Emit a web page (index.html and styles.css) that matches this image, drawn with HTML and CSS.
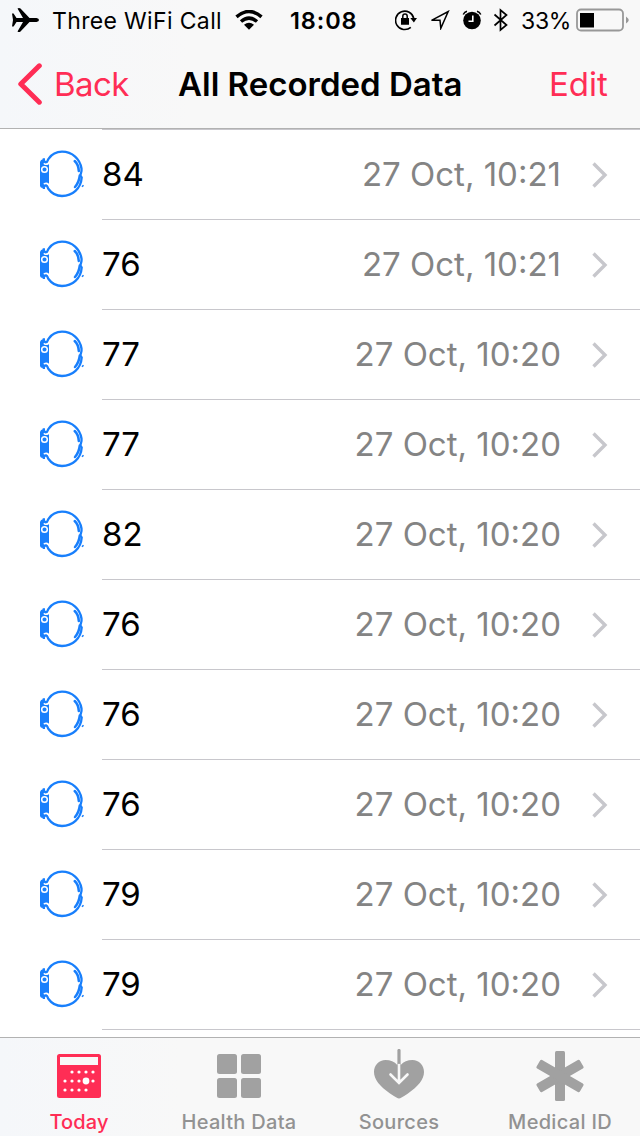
FILE: index.html
```html
<!DOCTYPE html>
<html lang="en">
<head>
<meta charset="UTF-8">
<meta name="viewport" content="width=device-width, initial-scale=1.0">
<title>All Recorded Data</title>
<link rel="stylesheet" href="styles.css">
</head>
<body>

<!-- shared icons for the list rows -->
<svg class="sprite" width="0" height="0">
    <symbol id="watch" viewBox="0 0 56 56">
        <path d="M6 16Q6.500 13.800 8.500 13.200L15 17V38.500L8.500 42Q6.500 41.800 6 40Z" fill="#187ffc"/>
        <path d="M16 15.500Q13.500 19.500 10 17M16 40.500Q13.500 36 10 38.500" fill="none" stroke="#fff" stroke-width="2.200"/>
        <path d="M9.800 12.200Q9.800 16.800 12.200 16.200C13.700 15.700 13.300 14.500 14.500 12.800C17.500 8.500 22.500 5.700 28 5.700C38.500 5.700 46 13 47.500 22.500C48 26.500 46.300 27.500 46.500 29.500L47.700 31.500C47 42.500 38.500 50 28 50C22.500 50 17.500 47.200 14.500 43C13.300 41.300 13.700 40 12.200 39.500Q9.800 39 9.800 43" fill="none" stroke="#187ffc" stroke-width="2.300"/>
        <circle cx="10.500" cy="23.500" r="2.800" fill="#187ffc" stroke="#fff" stroke-width="1.500"/>
        <path d="M40.700 15Q44.500 18.500 44.800 25M45.800 29.500Q45 36.500 41 41" fill="none" stroke="#187ffc" stroke-width="2.500" stroke-linecap="round"/>
        <path d="M48 40.800L49.500 39.200" stroke="#187ffc" stroke-width="1.500"/>
    </symbol>
    <symbol id="chevron" viewBox="0 0 18 28">
        <path d="M2.500 2.500L14 14L2.500 25.500" fill="none" stroke="#c7c7cc" stroke-width="3.400"/>
    </symbol>
</svg>

<div class="phone">
    <header class="header">
        <div class="status">
            <div class="status-left">
                <svg class="plane" width="30" height="26" viewBox="0 0 30 26">
                    <path d="M1 6.500H2.600L5.500 11H12L6.500 1.500Q8 0.300 9.500 1.500L18.500 11H25.500Q28 11.300 28 13Q28 14.700 25.500 15H18.500L9.500 24.500Q8 25.700 6.500 24.500L12 15H5.500L2.600 19.500H1L2 13Z"/>
                </svg>
                <span class="carrier">Three WiFi Call</span>
                <svg class="wifi" width="28" height="20" viewBox="0 0 28 20">
                    <path d="M1.500 6.800Q14 -3.800 26.500 6.800M6 11.500Q14 4.800 22 11.500" fill="none" stroke="#000" stroke-width="3.500"/>
                    <path d="M9 14.800Q14 10.500 19 14.800L14 19.700Z"/>
                </svg>
            </div>
            <span class="clock">18:08</span>
            <div class="status-right">
                <svg class="lock" width="24" height="22" viewBox="0 0 24 22">
                    <path d="M15.800 18.300A9.200 9.200 0 1 1 18.800 9.500" fill="none" stroke="#000" stroke-width="1.600"/>
                    <path d="M15.300 9H22L18.900 13.500ZM6 9H14V15.800H6Z"/>
                    <path d="M7.800 9.500V7.200A2.200 2.200 0 0 1 12.200 7.200V9.500" fill="none" stroke="#000" stroke-width="1.500"/>
                </svg>
                <svg class="location" width="20" height="20" viewBox="0 0 20 20">
                    <path d="M1.500 10.300L18.200 1.500L10.800 18.300L10 10.300Z" fill="none" stroke="#000" stroke-width="1.500"/>
                </svg>
                <svg class="alarm" width="20" height="20" viewBox="0 0 20 20">
                    <circle cx="10" cy="10.500" r="8.800"/>
                    <path d="M1.200 4.500Q2.500 2 5 1.300M18.800 4.500Q17.500 2 15 1.300" fill="none" stroke="#000" stroke-width="1.500"/>
                    <path d="M10.800 5.500V11.300H6.500" fill="none" stroke="#fff" stroke-width="1.600"/>
                </svg>
                <svg class="bluetooth" width="16" height="24" viewBox="0 0 16 24">
                    <path d="M1.500 6.500L13.500 17L7.500 22V2L13.500 7L1.500 17.500" fill="none" stroke="#000" stroke-width="1.700"/>
                </svg>
                <span class="percent">33%</span>
                <svg class="battery" width="54" height="24" viewBox="0 0 54 24">
                    <rect x="1" y="1.500" width="46" height="21" rx="4" fill="none" stroke="#989898" stroke-width="1.800"/>
                    <rect x="4" y="5" width="14" height="14.500"/>
                    <path d="M50 8.500Q52.800 10.500 52.800 12Q52.800 13.500 50 15.500Z" fill="#989898"/>
                </svg>
            </div>
        </div>

        <nav class="nav">
            <a class="back">
                <svg width="26" height="42" viewBox="0 0 26 42">
                    <path d="M22.300 2.800L3.800 21L22.300 39.200" fill="none" stroke="#ff2d55" stroke-width="5" stroke-linecap="round" stroke-linejoin="round"/>
                </svg>
                <span>Back</span>
            </a>
            <h1>All Recorded Data</h1>
            <a class="edit">Edit</a>
        </nav>
    </header>

    <ul class="list">
        <li><svg class="watch"><use href="#watch"/></svg><div class="row"><span class="value">84</span><span class="date">27 Oct, 10:21</span><svg class="chevron"><use href="#chevron"/></svg></div></li>
        <li><svg class="watch"><use href="#watch"/></svg><div class="row"><span class="value">76</span><span class="date">27 Oct, 10:21</span><svg class="chevron"><use href="#chevron"/></svg></div></li>
        <li><svg class="watch"><use href="#watch"/></svg><div class="row"><span class="value">77</span><span class="date">27 Oct, 10:20</span><svg class="chevron"><use href="#chevron"/></svg></div></li>
        <li><svg class="watch"><use href="#watch"/></svg><div class="row"><span class="value">77</span><span class="date">27 Oct, 10:20</span><svg class="chevron"><use href="#chevron"/></svg></div></li>
        <li><svg class="watch"><use href="#watch"/></svg><div class="row"><span class="value">82</span><span class="date">27 Oct, 10:20</span><svg class="chevron"><use href="#chevron"/></svg></div></li>
        <li><svg class="watch"><use href="#watch"/></svg><div class="row"><span class="value">76</span><span class="date">27 Oct, 10:20</span><svg class="chevron"><use href="#chevron"/></svg></div></li>
        <li><svg class="watch"><use href="#watch"/></svg><div class="row"><span class="value">76</span><span class="date">27 Oct, 10:20</span><svg class="chevron"><use href="#chevron"/></svg></div></li>
        <li><svg class="watch"><use href="#watch"/></svg><div class="row"><span class="value">76</span><span class="date">27 Oct, 10:20</span><svg class="chevron"><use href="#chevron"/></svg></div></li>
        <li><svg class="watch"><use href="#watch"/></svg><div class="row"><span class="value">79</span><span class="date">27 Oct, 10:20</span><svg class="chevron"><use href="#chevron"/></svg></div></li>
        <li><svg class="watch"><use href="#watch"/></svg><div class="row"><span class="value">79</span><span class="date">27 Oct, 10:20</span><svg class="chevron"><use href="#chevron"/></svg></div></li>
    </ul>

    <footer class="tabs">
        <a class="tab active">
            <svg width="52" height="52" viewBox="0 0 52 52">
                <rect x="4" y="5" width="44" height="44" rx="2.500" fill="#ff2d55"/>
                <path d="M7 8H45V16H7Z" fill="#f8f8f8"/>
                <g fill="#fff">
                    <circle cx="19" cy="23" r="1.600"/><circle cx="26" cy="23" r="1.600"/><circle cx="33" cy="23" r="1.600"/><circle cx="40" cy="23" r="1.600"/>
                    <circle cx="12" cy="32" r="1.600"/><circle cx="19" cy="32" r="1.600"/><circle cx="26" cy="32" r="1.600"/><circle cx="33" cy="32" r="3.400"/><circle cx="40" cy="32" r="1.600"/>
                    <circle cx="12" cy="41" r="1.600"/><circle cx="19" cy="41" r="1.600"/><circle cx="26" cy="41" r="1.600"/><circle cx="33" cy="41" r="1.600"/>
                </g>
            </svg>
            <span>Today</span>
        </a>
        <a class="tab">
            <svg width="52" height="52" viewBox="0 0 52 52" fill="#a1a1a1">
                <rect x="4" y="5" width="20" height="20" rx="2.500"/>
                <rect x="28" y="5" width="20" height="20" rx="2.500"/>
                <rect x="4" y="29" width="20" height="20" rx="2.500"/>
                <rect x="28" y="29" width="20" height="20" rx="2.500"/>
            </svg>
            <span>Health Data</span>
        </a>
        <a class="tab">
            <svg width="52" height="52" viewBox="0 0 52 52">
                <path d="M26 49.500Q24.500 49.500 17 44.500C7 37.500 1 30.500 1 23C1 16 6 11 12.500 11Q20 11 24.300 16H27.700Q32 11 39.500 11C46 11 51 16 51 23C51 30.500 45 37.500 35 44.500Q27.500 49.500 26 49.500Z" fill="#a1a1a1"/>
                <path d="M26 1.500V16" stroke="#a1a1a1" stroke-width="3.200" stroke-linecap="round"/>
                <path d="M26 16V33M17.500 25.500L26 34L34.500 25.500" fill="none" stroke="#f8f8f8" stroke-width="2.600" stroke-linecap="round"/>
            </svg>
            <span>Sources</span>
        </a>
        <a class="tab">
            <svg width="52" height="52" viewBox="0 0 52 52" fill="#a1a1a1">
                <rect x="21" y="2" width="10" height="50" rx="1.500"/>
                <rect x="21" y="2" width="10" height="50" rx="1.500" transform="rotate(60 26 27)"/>
                <rect x="21" y="2" width="10" height="50" rx="1.500" transform="rotate(-60 26 27)"/>
            </svg>
            <span>Medical ID</span>
        </a>
    </footer>
</div>

</body>
</html>
```
FILE: styles.css
```css
* {
    box-sizing: border-box;
}

body {
    margin: 0;
    background-color: #fff;
    font-family: Inter, "Liberation Sans", sans-serif;
}

svg {
    display: block;
    flex-shrink: 0;
}

.sprite {
    position: absolute;
}

.phone {
    display: flex;
    flex-direction: column;
    width: 640px;
    height: 1136px;
    overflow: hidden;
}

.header {
    height: 129px;
    background: linear-gradient(to right, #f5f7fa, #f8f8f8 190px);
    border-bottom: 1px solid #b2b2b2;
}

/* status bar */
.status {
    display: grid;
    grid-template-columns: 290px 68px 1fr;
    align-items: center;
    height: 40px;
    white-space: nowrap;
}

.status-left, .status-right {
    display: flex;
    align-items: center;
}

.status-left {
    padding-left: 11px;
}

.carrier {
    width: 170px;
    margin-left: 11px;
    padding-top: 1px;
    font-size: 23px;
    letter-spacing: 0.35px;
}

.wifi {
    margin-left: 13px;
}

.clock {
    font-size: 23.5px;
    font-weight: 600;
    letter-spacing: 0.9px;
}

.status-right {
    padding-left: 37px;
}

.location {
    margin-left: 11px;
}

.alarm {
    margin-left: 12px;
}

.bluetooth {
    margin-left: 11px;
}

.percent {
    width: 49px;
    margin-left: 12px;
    padding-top: 1px;
    font-size: 23px;
    letter-spacing: -0.3px;
}

.battery {
    margin-left: 6px;
}

/* navigation bar */
.nav {
    display: grid;
    grid-template-columns: 178px 1fr 91px;
    align-items: center;
    height: 88px;
    font-size: 33px;
    white-space: nowrap;
}

.back {
    display: flex;
    align-items: center;
    gap: 11px;
    padding-left: 17px;
    color: #ff2d55;
}

.back span {
    letter-spacing: -0.6px;
}

h1 {
    margin: 0;
    font-size: 33px;
    font-weight: 600;
}

.edit {
    color: #ff2d55;
}

/* recorded values */
.list {
    flex: 1;
    margin: 0;
    padding: 0;
    list-style: none;
}

.list::before {
    content: "";
    display: block;
    height: 1px;
    margin-left: 102px;
    background-color: #c8c7cc;
}

.list li {
    display: flex;
    align-items: center;
    gap: 12px;
    height: 90px;
    padding-left: 34px;
}

.watch {
    width: 56px;
    height: 56px;
    margin-bottom: 2px;
}

.row {
    display: flex;
    flex: 1;
    align-items: center;
    height: 90px;
    padding-right: 31px;
    border-bottom: 1px solid #c8c7cc;
    font-size: 33px;
}

.value, .date {
    padding-bottom: 2px;
}

.value {
    flex: 1;
}

.date {
    color: #848484;
}

.chevron {
    width: 18px;
    height: 28px;
    margin-left: 30px;
}

/* tab bar */
.tabs {
    display: grid;
    grid-template-columns: repeat(4, 160px);
    height: 99px;
    background: linear-gradient(to right, #f5f7fa, #f8f8f8 180px);
    border-top: 1px solid #b2b2b2;
}

.tab {
    display: flex;
    flex-direction: column;
    align-items: center;
    padding-top: 11px;
    padding-right: 2px;
    color: #929292;
    font-size: 20px;
    font-weight: 500;
    letter-spacing: 0.3px;
}

.tab:last-child {
    padding-right: 0;
}

.tab span {
    margin-top: 9px;
    white-space: nowrap;
}

.active {
    color: #ff2d55;
    letter-spacing: 0.1px;
}
```
